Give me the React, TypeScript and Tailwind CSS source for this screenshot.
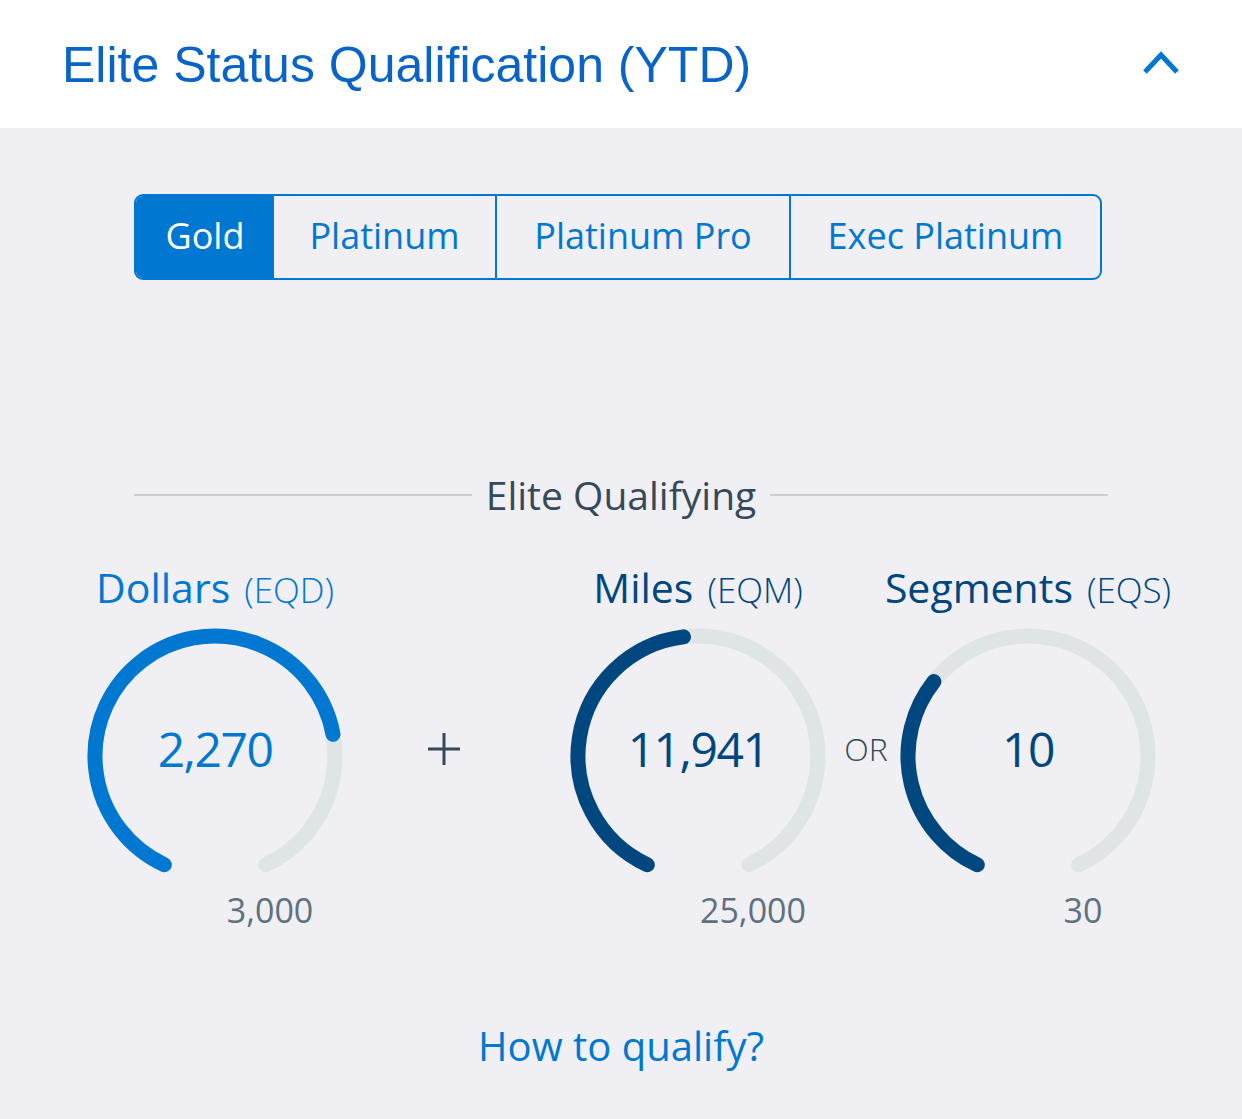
const font = { fontFamily: '"Open Sans", "Noto Sans", sans-serif' };

function polar(cx: number, cy: number, r: number, deg: number) {
  const a = (deg * Math.PI) / 180;
  return [cx - r * Math.sin(a), cy + r * Math.cos(a)];
}

function arc(from: number, to: number) {
  const [x1, y1] = polar(128, 128, 120, from);
  const [x2, y2] = polar(128, 128, 120, to);
  const large = to - from > 180 ? 1 : 0;
  return `M ${x1} ${y1} A 120 120 0 ${large} 1 ${x2} ${y2}`;
}

function Gauge({
  label,
  code,
  value,
  max,
  pct,
  color,
}: {
  label: string;
  code: string;
  value: string;
  max: string;
  pct: number;
  color: string;
}) {
  const start = 25;
  const sweep = 310;
  return (
    <div className="w-[256px] flex flex-col items-center shrink-0">
      <div className="flex justify-center items-baseline whitespace-nowrap h-[48px] leading-[48px]" style={{ color }}>
        <span className="text-[41px] font-medium">{label}</span>
        <span className="text-[35px] font-light ml-[14px]">{code}</span>
      </div>
      <div className="relative w-[256px] h-[256px] mt-[17px]">
        <svg width="256" height="256" viewBox="0 0 256 256">
          <path d={arc(start, start + sweep)} fill="none" stroke="#dfe4e7" strokeWidth="15" strokeLinecap="round" />
          <path d={arc(start, start + sweep * pct)} fill="none" stroke={color} strokeWidth="15" strokeLinecap="round" />
        </svg>
        <div className="absolute inset-0 flex items-center justify-center pb-[14px]">
          <span className="text-[48px] font-normal tracking-[-1.5px] leading-none" style={{ color }}>
            {value}
          </span>
        </div>
      </div>
      <div className="w-full flex justify-center mt-[6px]">
        <span className="ml-[110px] text-[34px] leading-[40px] text-[#5f717e] whitespace-nowrap">{max}</span>
      </div>
    </div>
  );
}

export default function App() {
  return (
    <div className="w-[1242px] min-h-[1119px] bg-[#efeff4]" style={font}>
      {/* header */}
      <div className="h-[128px] bg-white flex items-center justify-between pl-[62px] pr-[60px]">
        <h1
          className="text-[50px] leading-none text-[#0a64c8] pt-[2px]"
          style={{ fontFamily: '"Liberation Sans", Arial, sans-serif' }}
        >
          Elite Status Qualification (YTD)
        </h1>
        <svg width="40" height="30" viewBox="0 0 40 30" className="mt-[-2px]">
          <polyline points="3,24 19,7 35,24" fill="none" stroke="#0078d2" strokeWidth="5" />
        </svg>
      </div>

      {/* tabs */}
      <div className="pt-[66px] pl-[134px]">
        <div className="w-[968px] h-[86px] flex border-2 border-[#0078d2] rounded-[9px] overflow-hidden text-[36px] text-[#0078d2]">
          <div className="w-[138px] bg-[#0078d2] text-white flex items-center justify-center pb-[3px]">Gold</div>
          <div className="w-[221px] flex items-center justify-center pb-[3px]">Platinum</div>
          <div className="w-[294px] border-l-2 border-[#0078d2] flex items-center justify-center pb-[3px]">Platinum Pro</div>
          <div className="flex-1 border-l-2 border-[#0078d2] flex items-center justify-center pb-[3px]">Exec Platinum</div>
        </div>
      </div>

      {/* divider */}
      <div className="mt-[191px] ml-[134px] w-[974px] flex items-center gap-[14px]">
        <div className="flex-1 h-[2px] bg-[#cdcdd2]" />
        <span className="text-[39px] leading-[48px] text-[#36495a]">Elite Qualifying</span>
        <div className="flex-1 h-[2px] bg-[#cdcdd2]" />
      </div>

      {/* gauges */}
      <div className="mt-[44px] pl-[87px] flex items-start">
        <Gauge label="Dollars" code="(EQD)" value="2,270" max="3,000" pct={2270 / 3000} color="#0078d2" />
        <div className="w-[227px] h-[256px] mt-[65px] flex items-center justify-center pr-[25px] pb-[14px]">
          <svg width="34" height="34" viewBox="0 0 34 34">
            <path d="M17 1 V33 M1 17 H33" stroke="#36495a" strokeWidth="3" />
          </svg>
        </div>
        <Gauge label="Miles" code="(EQM)" value="11,941" max="25,000" pct={11941 / 25000} color="#00467f" />
        <div className="w-[74px] h-[256px] mt-[65px] flex items-center justify-center pl-[6px] pb-[14px]">
          <span className="text-[32px] font-light leading-none text-[#36495a]">OR</span>
        </div>
        <Gauge label="Segments" code="(EQS)" value="10" max="30" pct={10 / 30} color="#00467f" />
      </div>

      {/* link */}
      <div className="mt-[92px] text-center text-[40px] leading-[48px] text-[#0078d2]">How to qualify?</div>
    </div>
  );
}
